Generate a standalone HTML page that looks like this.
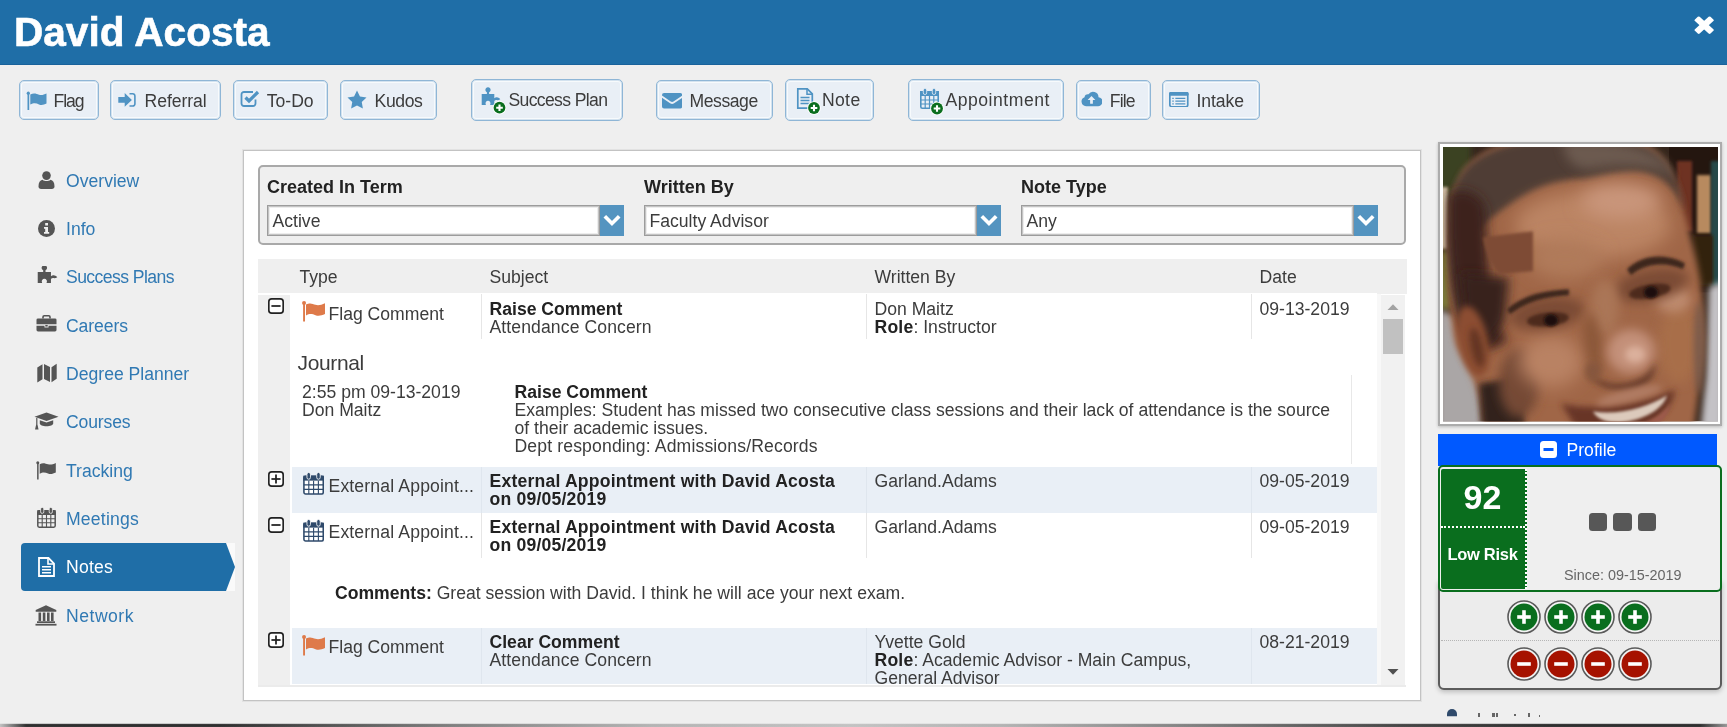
<!DOCTYPE html>
<html>
<head>
<meta charset="utf-8">
<title>David Acosta</title>
<style>
*{box-sizing:border-box;margin:0;padding:0}
html{background:#efefef}
html,body{width:1727px;height:727px;overflow:hidden;background:#efefef;font-family:"Liberation Sans",sans-serif;font-size:17.6px;color:#3c3c3c}
b{font-weight:bold;letter-spacing:.2px;color:#222}
.abs{position:absolute}
body{opacity:.9999}
#hdr{position:absolute;left:0;top:0;width:1727px;height:65px;background:#1f6ea7;border-bottom:1px solid #19629b}
#hdr h1{position:absolute;left:14px;top:8px;font-size:40.6px;line-height:48px;color:#fff;font-weight:bold;white-space:nowrap;-webkit-text-stroke:.6px #fff}
.btn{position:absolute;border:1px solid #8fb6d6;border-radius:5px;background:#e9eff6;box-shadow:inset 0 0 0 1px #d3e2ef,inset 0 0 0 2px #f7fafc;white-space:nowrap;color:#3c3c3c}
.btn span{position:absolute;line-height:20px}
.btn svg{position:absolute}
.nav{position:absolute;left:66px;color:#3079b3;line-height:20px;white-space:nowrap}
.navi{position:absolute}
#active{position:absolute;left:21px;top:543px;width:205px;height:48px;background:#1f6ea7;border-radius:4px 0 0 4px}
#active:after{content:"";position:absolute;left:205px;top:0;border-left:9px solid #1f6ea7;border-top:24px solid #fafafa;border-bottom:24px solid #fafafa}
#panel{position:absolute;left:243px;top:150px;width:1178px;height:551px;background:#fff;border:1px solid #c3c3c3;box-shadow:0 0 0 1px rgba(0,0,0,.05)}
#filter{position:absolute;left:258px;top:165px;width:1148px;height:80px;background:#efefef;border:2px solid #a9a9a9;border-radius:5px}
.flabel{position:absolute;top:177px;font-weight:bold;color:#222;font-size:18px;line-height:20px;white-space:nowrap}
.sel{position:absolute;top:205px;height:31px;width:333px;background:#fff;border:1px solid #9c9c9c;box-shadow:inset 0 0 0 1px #c4c4c4,inset 0 0 0 2px #ededed;line-height:31px;padding-left:4.5px;white-space:nowrap}
.selbtn{position:absolute;top:205px;width:24px;height:31px;background:#5494c0}
#thead{position:absolute;left:258px;top:259px;width:1148.5px;height:34.5px;background:#efefef}
.th{position:absolute;top:267px;line-height:20px;white-space:nowrap}
.t{position:absolute;line-height:18px;white-space:nowrap}
</style>
</head>
<body>
<div id="hdr"><h1>David Acosta</h1><svg class="abs" style="left:1694.400px;top:16px" width="20.300" height="18.300" viewBox="0 0 20 20" preserveAspectRatio="none"><g fill="#fff"><rect x="-0.850" y="6.700" width="21.700" height="6.600" rx="1.300" transform="rotate(45 10 10)"/><rect x="-0.850" y="6.700" width="21.700" height="6.600" rx="1.300" transform="rotate(-45 10 10)"/></g></svg></div>
<div class="btn" style="left:19px;width:80px;top:80px;height:40px"><svg style="left:6.0px;top:10.0px" width="22" height="20" viewBox="0 0 22 20"><circle cx="2.3" cy="2.2" r="1.6" fill="#4f93c3"/><rect x="1.5" y="2" width="1.7" height="17" fill="#4f93c3"/><path d="M4.3 3.6C8 1.6 10.5 3 13 3.800 15.500 4.600 18 3.800 20.500 2.600V12.400C18 13.800 15.500 14.400 13 13.400 10.500 12.400 8 11.600 4.300 13.600Z" fill="#4f93c3"/></svg><span style="left:33.5px;top:10.2px;font-size:17.6px;letter-spacing:-1.1px">Flag</span></div>
<div class="btn" style="left:110px;width:111px;top:80px;height:40px"><svg style="left:7px;top:11px" width="20" height="17" viewBox="0 0 20 17"><path d="M0.300 5.100h6.400V1L13.900 7.900 6.700 14.800V10.700H0.300z" fill="#4f93c3"/><path d="M11.500 1.800h3.300a2.100 2.100 0 0 1 2.100 2.100v8a2.100 2.100 0 0 1 -2.100 2.100H11.500" fill="none" stroke="#4f93c3" stroke-width="1.6"/></svg><span style="left:33.6px;top:10.2px;font-size:17.6px;letter-spacing:-0.07px">Referral</span></div>
<div class="btn" style="left:232.5px;width:95.5px;top:80px;height:40px"><svg style="left:6.0px;top:8.3px" width="21" height="19" viewBox="0 0 21 19"><path d="M15.500 10.500v4a2.500 2.500 0 0 1 -2.500 2.500H4a2.500 2.500 0 0 1 -2.500 -2.500V5.500a2.500 2.500 0 0 1 2.500 -2.500h9" fill="none" stroke="#4f93c3" stroke-width="1.8"/><path d="M5.500 8.500l3.500 3.500 9-9" fill="none" stroke="#4f93c3" stroke-width="3.200"/></svg><span style="left:33.2px;top:10.2px;font-size:17.6px;letter-spacing:0px">To-Do</span></div>
<div class="btn" style="left:339.5px;width:97.5px;top:80px;height:40px"><svg style="left:6.0px;top:9.0px" width="20" height="19" viewBox="0 0 21 20"><path d="M10.500 0.500l3.100 6.300 6.900 1-5 4.900 1.200 6.900-6.200-3.300-6.200 3.300 1.200-6.900-5-4.900 6.900-1z" fill="#4f93c3"/></svg><span style="left:34.1px;top:10.2px;font-size:17.6px;letter-spacing:-0.42px">Kudos</span></div>
<div class="btn" style="left:470.5px;width:152.5px;top:79px;height:42px"><svg style="left:9.4px;top:6.3px" width="28" height="30" viewBox="0 0 28 30"><path d="M0.7 7.9H5.9V6.2A2.6 2.6 0 1 1 8.1 6.2V7.9H13.3V12.2C14.2 11.4 15.4 11 16.6 11.4 18 11.8 19 12.6 19.3 13.2 18.3 13.9 17 14.3 15.6 14.1 14.6 14 13.9 14.3 13.3 15V19H9.2V18.3A2.45 2.45 0 1 0 4.8 18.3V19H0.7z" fill="#4f93c3"/><g transform="translate(18.5,21.7)"><circle r="6.8" fill="#fff"/><circle r="5.9" fill="#0a6e1e"/><path d="M-3.3 0H3.3M0 -3.3V3.3" stroke="#fff" stroke-width="2.1"/></g></svg><span style="left:36.9px;top:10.2px;font-size:17.6px;letter-spacing:-0.64px">Success Plan</span></div>
<div class="btn" style="left:655.5px;width:117.5px;top:80px;height:40px"><svg style="left:5px;top:12px" width="20.200" height="15.600" preserveAspectRatio="none" viewBox="0 0 22 17"><path d="M0 2.200a2.200 2.200 0 0 1 2.200-2.200h17.600a2.200 2.200 0 0 1 2.200 2.200v.6l-9.500 6.500q-1.500 1-3 0L0 2.800z" fill="#4f93c3"/><path d="M0 5.200l8.800 6q2.200 1.400 4.400 0l8.800-6v9.600a2.200 2.200 0 0 1 -2.200 2.200H2.200a2.200 2.200 0 0 1 -2.200-2.200z" fill="#4f93c3"/></svg><span style="left:33.1px;top:10.2px;font-size:17.6px;letter-spacing:-0.47px">Message</span></div>
<div class="btn" style="left:784.5px;width:89.5px;top:79px;height:42px"><svg style="left:10px;top:8px" width="28" height="28" viewBox="0 0 28 28"><path d="M1.800 0.900h9.500l5 5V20.100H1.800z" fill="none" stroke="#4f93c3" stroke-width="1.700"/><path d="M11 1v5.300h5.300" fill="none" stroke="#4f93c3" stroke-width="1.500"/><path d="M4.500 9.500h9M4.500 12.500h9M4.500 15.500h9" stroke="#4f93c3" stroke-width="1.300"/><g transform="translate(18,20)"><circle r="6.8" fill="#fff"/><circle r="5.9" fill="#0a6e1e"/><path d="M-3.3 0H3.3M0 -3.3V3.3" stroke="#fff" stroke-width="2.1"/></g></svg><span style="left:36.4px;top:10.2px;font-size:17.6px;letter-spacing:0.37px">Note</span></div>
<div class="btn" style="left:908px;width:155.5px;top:79px;height:42px"><svg style="left:10.0px;top:8.0px" width="28" height="28" viewBox="0 0 28 28"><rect x="1.800" y="3.800" width="17.400" height="16.400" rx="1.500" fill="none" stroke="#4f93c3" stroke-width="1.600"/><rect x="1" y="3" width="19" height="5" fill="#4f93c3"/><rect x="4.300" y="0.500" width="3.400" height="6" rx="1.600" fill="#4f93c3" stroke="#e9eff6" stroke-width="0.800"/><rect x="13.300" y="0.500" width="3.400" height="6" rx="1.600" fill="#4f93c3" stroke="#e9eff6" stroke-width="0.800"/><path d="M6.200 8v12M10.500 8v12M14.800 8v12M2 12h17M2 16h17" stroke="#4f93c3" stroke-width="1.200"/><g transform="translate(18,20.5)"><circle r="6.8" fill="#fff"/><circle r="5.9" fill="#0a6e1e"/><path d="M-3.3 0H3.3M0 -3.3V3.3" stroke="#fff" stroke-width="2.1"/></g></svg><span style="left:36.4px;top:10.2px;font-size:17.6px;letter-spacing:0.53px">Appointment</span></div>
<div class="btn" style="left:1075.5px;width:75px;top:80px;height:40px"><svg style="left:4.300px;top:10.300px" width="21" height="15.600" preserveAspectRatio="none" viewBox="0 0 23 17"><path d="M5.500 16.500a5 5 0 0 1 -1.600-9.700 3.600 3.600 0 0 1 4.300-3.300 6 6 0 0 1 11 3.200 4.900 4.900 0 0 1 -1.200 9.800z" fill="#4f93c3"/><path d="M11.500 5.500l4.200 4.400h-2.700v4h-3v-4H7.300z" fill="#e9eff6"/></svg><span style="left:33.3px;top:10.2px;font-size:17.6px;letter-spacing:-0.9px">File</span></div>
<div class="btn" style="left:1162px;width:97.5px;top:80px;height:40px"><svg style="left:6px;top:10.500px" width="19.600" height="15.600" preserveAspectRatio="none" viewBox="0 0 21 17"><rect x="0.900" y="0.900" width="19.200" height="15.200" rx="1.800" fill="none" stroke="#4f93c3" stroke-width="1.800"/><rect x="0" y="0" width="21" height="4" rx="1.500" fill="#4f93c3"/><path d="M3.500 7h1.600M3.500 10h1.600M3.500 13h1.600M6.800 7h10.700M6.800 10h10.700M6.800 13h10.700" stroke="#4f93c3" stroke-width="1.400"/></svg><span style="left:33.4px;top:10.2px;font-size:17.6px;letter-spacing:-0.06px">Intake</span></div>
<div id="active"></div>
<svg class="navi" style="left:38px;top:170.5px" width="17" height="18" viewBox="0 0 17 18"><circle cx="8.5" cy="4.600" r="4.300" fill="#555"/><path d="M0.500 15.500c0-4 1.500-6.300 4-6.800 1.200 1 2.600 1.400 4 1.400s2.800-.4 4-1.400c2.500.5 4 2.800 4 6.800 0 1.600-1 2.500-2.600 2.500H3.100C1.500 18 .5 17.100 .5 15.500z" fill="#555"/></svg>
<div class="nav" style="top:170.5px;">Overview</div>
<svg class="navi" style="left:38px;top:219.9px" width="17" height="17" viewBox="0 0 17 17"><circle cx="8.500" cy="8.500" r="8.500" fill="#555"/><path d="M7.200 3h2.800v2.400H7.200zM6 7h4v5h1.200v1.800H6V12h1.200V8.800H6z" fill="#efefef"/></svg>
<div class="nav" style="top:218.9px;">Info</div>
<svg class="navi" style="left:36.5px;top:266.2px" width="21" height="20" viewBox="0 0 20 20" preserveAspectRatio="none"><g transform="translate(0,-2)"><path d="M0.7 7.9H5.9V6.2A2.6 2.6 0 1 1 8.1 6.2V7.9H13.3V12.2C14.2 11.4 15.4 11 16.6 11.4 18 11.8 19 12.6 19.3 13.2 18.3 13.9 17 14.3 15.6 14.1 14.6 14 13.9 14.3 13.3 15V19H9.2V18.3A2.45 2.45 0 1 0 4.8 18.3V19H0.7z" fill="#555"/></g></svg>
<div class="nav" style="top:267.2px;letter-spacing:-0.58px;">Success Plans</div>
<svg class="navi" style="left:36px;top:315px" width="21" height="17.500" viewBox="0 0 21 18" preserveAspectRatio="none"><path d="M7 3.500V2a1.200 1.200 0 0 1 1.200-1.200h4.600A1.200 1.200 0 0 1 14 2v1.500" fill="none" stroke="#555" stroke-width="1.600"/><path d="M0.500 5a1.500 1.500 0 0 1 1.500-1.500h17a1.500 1.500 0 0 1 1.500 1.500v4.500h-20zM0.500 11h8v1.800h4V11h8v4.500a1.500 1.500 0 0 1-1.500 1.500H2a1.500 1.500 0 0 1-1.500-1.500z" fill="#555"/><rect x="9.300" y="10.200" width="2.400" height="1.700" fill="#555"/></svg>
<div class="nav" style="top:315.5px;letter-spacing:-0.1px;">Careers</div>
<svg class="navi" style="left:36.800px;top:363.4px" width="20" height="20" viewBox="0 0 20 20"><path d="M0.300 4.500L5.500 1.200V16.200L0.300 19.500zM7 1l6 3v15l-6-3zM14.500 4.200L19.700 0.800V15.800L14.500 19.200z" fill="#555"/></svg>
<div class="nav" style="top:363.9px;">Degree Planner</div>
<svg class="navi" style="left:34px;top:412.4px" width="25" height="18" viewBox="0 0 25 18"><path d="M12.500 0.500L24.500 4.800 12.500 9.100 0.500 4.800z" fill="#555"/><path d="M5.800 8.200l6.700 2.400 6.700-2.400v3.300c0 1.500-3 2.700-6.700 2.700s-6.700-1.200-6.700-2.700z" fill="#555"/><path d="M2.800 6v6.500l-1 4.500h2l-1-4.500" stroke="#555" stroke-width="1.200" fill="#555"/></svg>
<div class="nav" style="top:412.2px;letter-spacing:-0.15px;">Courses</div>
<svg class="navi" style="left:36px;top:461px" width="21" height="19" viewBox="0 0 21 19"><circle cx="1.800" cy="1.800" r="1.500" fill="#555"/><rect x="1.100" y="1.500" width="1.500" height="17" fill="#555"/><path d="M3.700 3.200C7 1.300 9.500 2.500 12 3.300c2.500.8 5 0 7.800-1.300V11.500c-2.800 1.400-5.300 2-7.800 1-2.500-1-5-1.700-8.300.2z" fill="#555"/></svg>
<div class="nav" style="top:460.5px;">Tracking</div>
<svg class="navi" style="left:37px;top:507.4px" width="19" height="21" viewBox="0 0 19 21"><rect x="0.800" y="3.800" width="17.400" height="16.400" rx="1.400" fill="none" stroke="#555" stroke-width="1.500"/><rect x="0.300" y="3.200" width="18.400" height="4.800" fill="#555"/><rect x="3.600" y="0.400" width="3.200" height="6" rx="1.500" fill="#555" stroke="#efefef" stroke-width="0.800"/><rect x="12.200" y="0.400" width="3.200" height="6" rx="1.500" fill="#555" stroke="#efefef" stroke-width="0.800"/><path d="M5.200 8v12M9.500 8v12M13.800 8v12M1 11.800h17M1 15.800h17" stroke="#555" stroke-width="1.100"/></svg>
<div class="nav" style="top:508.9px;letter-spacing:0.2px;">Meetings</div>
<svg class="navi" style="left:38px;top:556.7px" width="17" height="20" viewBox="0 0 17 20"><path d="M1 1h9.500l5.500 5.500V19H1z" fill="none" stroke="#fff" stroke-width="1.800"/><path d="M10 1.200V7h5.800" fill="none" stroke="#fff" stroke-width="1.600"/><path d="M4 9.700h9M4 12.700h9M4 15.700h9" stroke="#fff" stroke-width="1.400"/></svg>
<div class="nav" style="top:557.2px;color:#fff;letter-spacing:0.2px;">Notes</div>
<svg class="navi" style="left:35px;top:604.5px" width="22" height="21" viewBox="0 0 22 21"><path d="M11 0.300L21.300 5v1.700H0.700V5z" fill="#555"/><path d="M3.500 7.500h2.600V16H3.500zM7.800 7.500h2.600V16H7.800zM12 7.500h2.600V16H12zM16 7.500h2.600V16H16z" fill="#555"/><rect x="2" y="16.300" width="18" height="1.700" fill="#555"/><rect x="0.500" y="18.800" width="21" height="1.800" fill="#555"/></svg>
<div class="nav" style="top:605.5px;letter-spacing:0.5px;">Network</div>
<div id="panel"></div>
<div id="filter"></div>
<div class="flabel" style="left:267px">Created In Term</div>
<div class="sel" style="left:267px">Active</div>
<div class="selbtn" style="left:600px"><svg width="24" height="31" viewBox="0 0 24 31"><path d="M4.800 11.300l7.200 7.200 7.200-7.200" fill="none" stroke="#fff" stroke-width="3.700"/></svg></div>
<div class="flabel" style="left:644px">Written By</div>
<div class="sel" style="left:644px">Faculty Advisor</div>
<div class="selbtn" style="left:977px"><svg width="24" height="31" viewBox="0 0 24 31"><path d="M4.800 11.300l7.200 7.200 7.200-7.200" fill="none" stroke="#fff" stroke-width="3.700"/></svg></div>
<div class="flabel" style="left:1021px">Note Type</div>
<div class="sel" style="left:1021px">Any</div>
<div class="selbtn" style="left:1354px"><svg width="24" height="31" viewBox="0 0 24 31"><path d="M4.800 11.300l7.200 7.200 7.200-7.200" fill="none" stroke="#fff" stroke-width="3.700"/></svg></div>
<div id="thead"></div>
<div class="abs" style="left:258px;top:293px;width:32px;height:392px;background:#efefef"></div>
<div class="abs" style="left:258px;top:293px;width:1119px;height:1.5px;background:#fff"></div>
<div class="abs" style="left:1377px;top:294px;width:4px;height:391px;background:#f8f8f8"></div>
<div class="abs" style="left:1381px;top:294.5px;width:23.5px;height:390.5px;background:#f1f1f1"></div>
<div class="abs" style="left:258px;top:685px;width:1148px;height:2px;background:#ebebeb"></div>
<div class="th" style="left:299.5px">Type</div>
<div class="th" style="left:489.5px">Subject</div>
<div class="th" style="left:874.5px">Written By</div>
<div class="th" style="left:1259.5px">Date</div>
<div class="abs" style="left:292px;top:467px;width:1085px;height:46px;background:#e9eff6"></div>
<div class="abs" style="left:292px;top:628px;width:1085px;height:56px;background:#e9eff6"></div>
<div class="abs" style="left:481px;top:294px;width:1px;height:45px;background:#e6e6e6"></div>
<div class="abs" style="left:866px;top:294px;width:1px;height:45px;background:#e6e6e6"></div>
<div class="abs" style="left:1251px;top:294px;width:1px;height:45px;background:#e6e6e6"></div>
<div class="abs" style="left:481px;top:513px;width:1px;height:45px;background:#e6e6e6"></div>
<div class="abs" style="left:866px;top:513px;width:1px;height:45px;background:#e6e6e6"></div>
<div class="abs" style="left:1251px;top:513px;width:1px;height:45px;background:#e6e6e6"></div>
<div class="abs" style="left:481px;top:467px;width:1px;height:46px;background:#dfe6ee"></div>
<div class="abs" style="left:866px;top:467px;width:1px;height:46px;background:#dfe6ee"></div>
<div class="abs" style="left:1251px;top:467px;width:1px;height:46px;background:#dfe6ee"></div>
<div class="abs" style="left:481px;top:628px;width:1px;height:56px;background:#dfe6ee"></div>
<div class="abs" style="left:866px;top:628px;width:1px;height:56px;background:#dfe6ee"></div>
<div class="abs" style="left:1251px;top:628px;width:1px;height:56px;background:#dfe6ee"></div>
<div class="abs" style="left:1351px;top:375px;width:1px;height:89px;background:#e8e8e8"></div>
<svg class="abs" style="left:267.5px;top:298px" width="16" height="16" viewBox="0 0 15.5 15.5"><rect x="0.800" y="0.800" width="13.900" height="13.900" rx="2.800" fill="#fff" stroke="#222" stroke-width="1.600"/><path d="M3.300 7.750h8.900" stroke="#222" stroke-width="1.700"/></svg>
<svg class="abs" style="left:267.5px;top:470.5px" width="16" height="16" viewBox="0 0 15.5 15.5"><rect x="0.800" y="0.800" width="13.900" height="13.900" rx="2.800" fill="#fff" stroke="#222" stroke-width="1.600"/><path d="M3.300 7.750h8.900" stroke="#222" stroke-width="1.700"/><path d="M7.750 3.300v8.900" stroke="#222" stroke-width="1.700"/></svg>
<svg class="abs" style="left:267.5px;top:517px" width="16" height="16" viewBox="0 0 15.5 15.5"><rect x="0.800" y="0.800" width="13.900" height="13.900" rx="2.800" fill="#fff" stroke="#222" stroke-width="1.600"/><path d="M3.300 7.750h8.900" stroke="#222" stroke-width="1.700"/></svg>
<svg class="abs" style="left:267.5px;top:632px" width="16" height="16" viewBox="0 0 15.5 15.5"><rect x="0.800" y="0.800" width="13.900" height="13.900" rx="2.800" fill="#fff" stroke="#222" stroke-width="1.600"/><path d="M3.300 7.750h8.900" stroke="#222" stroke-width="1.700"/><path d="M7.750 3.300v8.900" stroke="#222" stroke-width="1.700"/></svg>
<svg class="abs" style="left:302px;top:300.5px" width="24" height="21" viewBox="0 0 24 21"><circle cx="2.050" cy="2.100" r="2" fill="#de7a4a"/><rect x="1.100" y="2" width="1.900" height="18.500" fill="#de7a4a"/><path d="M4 3.600C8 1.400 10.500 2.800 13.500 3.800c3 1 6 0 9.500-1.600V13c-3.500 1.600-6.500 2.300-9.500 1.200-3-1.100-5.500-2-9.500 .2z" fill="#de7a4a"/></svg>
<svg class="abs" style="left:303px;top:472px" width="21.200" height="23" viewBox="0 0 23 24" preserveAspectRatio="none"><rect x="1" y="4.500" width="21" height="18.500" rx="1.800" fill="#fff" stroke="#2f4a6b" stroke-width="1.700"/><rect x="0.300" y="3.800" width="22.400" height="5.200" fill="#2f4a6b"/><rect x="4.300" y="0.500" width="3.800" height="7" rx="1.800" fill="#2f4a6b" stroke="#fff" stroke-width="0.900"/><rect x="14.900" y="0.500" width="3.800" height="7" rx="1.800" fill="#2f4a6b" stroke="#fff" stroke-width="0.900"/><path d="M6.300 9v14M11.500 9v14M16.700 9v14M1 13.500h21M1 18.200h21" stroke="#2f4a6b" stroke-width="1.200"/></svg>
<svg class="abs" style="left:303px;top:518.5px" width="21.200" height="23" viewBox="0 0 23 24" preserveAspectRatio="none"><rect x="1" y="4.500" width="21" height="18.500" rx="1.800" fill="#fff" stroke="#2f4a6b" stroke-width="1.700"/><rect x="0.300" y="3.800" width="22.400" height="5.200" fill="#2f4a6b"/><rect x="4.300" y="0.500" width="3.800" height="7" rx="1.800" fill="#2f4a6b" stroke="#fff" stroke-width="0.900"/><rect x="14.900" y="0.500" width="3.800" height="7" rx="1.800" fill="#2f4a6b" stroke="#fff" stroke-width="0.900"/><path d="M6.300 9v14M11.500 9v14M16.700 9v14M1 13.500h21M1 18.200h21" stroke="#2f4a6b" stroke-width="1.200"/></svg>
<svg class="abs" style="left:302px;top:634.5px" width="24" height="21" viewBox="0 0 24 21"><circle cx="2.050" cy="2.100" r="2" fill="#de7a4a"/><rect x="1.100" y="2" width="1.900" height="18.500" fill="#de7a4a"/><path d="M4 3.600C8 1.400 10.500 2.800 13.500 3.800c3 1 6 0 9.500-1.600V13c-3.500 1.600-6.500 2.300-9.500 1.200-3-1.100-5.500-2-9.500 .2z" fill="#de7a4a"/></svg>
<div class="t" style="left:328.5px;top:304.7px;">Flag Comment</div>
<div class="t" style="left:489.5px;top:300.1px;"><b style="letter-spacing:0">Raise Comment</b></div>
<div class="t" style="left:489.5px;top:317.6px;letter-spacing:.1px">Attendance Concern</div>
<div class="t" style="left:874.5px;top:300.0px;">Don Maitz</div>
<div class="t" style="left:874.5px;top:317.6px;"><b>Role</b>: Instructor</div>
<div class="t" style="left:1259.5px;top:300.0px;">09-13-2019</div>
<div class="t" style="left:297.500px;top:351px;font-size:21px;line-height:24px;letter-spacing:-.35px">Journal</div>
<div class="t" style="left:302px;top:382.9px;">2:55 pm 09-13-2019</div>
<div class="t" style="left:302px;top:401.0px;">Don Maitz</div>
<div class="t" style="left:514.5px;top:382.9px;"><b style="letter-spacing:0">Raise Comment</b></div>
<div class="t" style="left:514.5px;top:401.0px;">Examples: Student has missed two consecutive class sessions and their lack of attendance is the source</div>
<div class="t" style="left:514.5px;top:419.1px;">of their academic issues.</div>
<div class="t" style="left:514.5px;top:437.1px;letter-spacing:.14px">Dept responding: Admissions/Records</div>
<div class="t" style="left:328.5px;top:477.0px;letter-spacing:.15px">External Appoint...</div>
<div class="t" style="left:489.5px;top:471.5px;"><b>External Appointment with David Acosta</b></div>
<div class="t" style="left:489.5px;top:489.6px;"><b>on 09/05/2019</b></div>
<div class="t" style="left:874.5px;top:471.5px;">Garland.Adams</div>
<div class="t" style="left:1259.5px;top:471.5px;">09-05-2019</div>
<div class="t" style="left:328.5px;top:523.4px;letter-spacing:.15px">External Appoint...</div>
<div class="t" style="left:489.5px;top:517.9px;"><b>External Appointment with David Acosta</b></div>
<div class="t" style="left:489.5px;top:536.0px;"><b>on 09/05/2019</b></div>
<div class="t" style="left:874.5px;top:517.9px;">Garland.Adams</div>
<div class="t" style="left:1259.5px;top:517.9px;">09-05-2019</div>
<div class="t" style="left:335px;top:584.0px;"><b style="letter-spacing:0">Comments:</b> Great session with David. I think he will ace your next exam.</div>
<div class="t" style="left:328.5px;top:638.0px;">Flag Comment</div>
<div class="t" style="left:489.5px;top:633.0px;"><b style="letter-spacing:0">Clear Comment</b></div>
<div class="t" style="left:489.5px;top:650.9px;letter-spacing:.1px">Attendance Concern</div>
<div class="t" style="left:874.5px;top:633.0px;">Yvette Gold</div>
<div class="t" style="left:874.5px;top:651.0px;"><b>Role</b>: Academic Advisor - Main Campus,</div>
<div class="t" style="left:874.500px;top:669.100px;height:16px;overflow:hidden">General Advisor</div>
<div class="t" style="left:1259.5px;top:633.0px;">08-21-2019</div>
<div class="abs" style="left:1383px;top:318.5px;width:19.700px;height:35px;background:#c1c1c1"></div>
<svg class="abs" style="left:1387px;top:303px" width="12" height="8" viewBox="0 0 12 8"><path d="M0.500 7l5.500-5.800 5.500 5.800z" fill="#a3a3a3"/></svg>
<svg class="abs" style="left:1387px;top:668px" width="12" height="8" viewBox="0 0 12 8"><path d="M0.500 1l5.500 5.800 5.500-5.800z" fill="#505050"/></svg>
<div class="abs" style="left:1438px;top:142px;width:284px;height:284px;background:#fff;border:2px solid #acacac;box-shadow:0 1px 3px rgba(0,0,0,.22)"></div>
<svg class="abs" style="left:1442.500px;top:147px" width="275" height="274.500" preserveAspectRatio="none" viewBox="0 0 275 274">
<defs>
<filter id="b2" x="-150%" y="-150%" width="400%" height="400%"><feGaussianBlur stdDeviation="1.8"/></filter>
<filter id="b3" x="-150%" y="-150%" width="400%" height="400%"><feGaussianBlur stdDeviation="3"/></filter>
<filter id="b6" x="-150%" y="-150%" width="400%" height="400%"><feGaussianBlur stdDeviation="5.500"/></filter>
<filter id="b10" x="-150%" y="-150%" width="400%" height="400%"><feGaussianBlur stdDeviation="9"/></filter>
<filter id="b16" x="-150%" y="-150%" width="400%" height="400%"><feGaussianBlur stdDeviation="14"/></filter>
<clipPath id="pc"><rect width="275" height="274"/></clipPath>
</defs>
<g clip-path="url(#pc)">
<rect width="275" height="274" fill="#35261d"/>
<!-- bg left -->
<rect x="-6" y="-6" width="34" height="56" fill="#3a4224" filter="url(#b3)"/>
<rect x="-4" y="40" width="9" height="62" fill="#cdbda4" filter="url(#b2)"/>
<rect x="-4" y="104" width="12" height="58" fill="#7c7e3a" filter="url(#b3)"/>
<!-- bg right -->
<rect x="226" y="-5" width="60" height="150" fill="#24160f"/>
<rect x="234" y="14" width="15" height="70" fill="#6e3222" filter="url(#b2)"/>
<rect x="254" y="28" width="14" height="58" fill="#b88a5e" filter="url(#b2)"/>
<rect x="268" y="14" width="10" height="125" fill="#254848" filter="url(#b2)"/>
<rect x="250" y="88" width="20" height="50" fill="#33200f" filter="url(#b2)"/>
<!-- shirt left / right -->
<path d="M-5 162 L12 168 L28 200 L38 240 L40 280 L-5 280z" fill="#aaa6a6" filter="url(#b3)"/>
<path d="M266 140 L280 134 L280 280 L258 280 L263 230z" fill="#c4c2c6" filter="url(#b3)"/>
<!-- head base -->
<path d="M20 24 C45 -10 110 -16 150 -14 C205 -12 228 4 240 60 C250 100 260 130 260 170 C260 215 255 250 250 285 L40 285 C40 250 30 230 14 200 C4 170 2 100 8 48z" fill="#a06646" filter="url(#b3)"/>
<!-- hair -->
<path d="M8 60 C10 20 40 -10 140 -10 C210 -10 232 10 242 66 C232 38 214 24 190 24 C160 26 150 32 137 32 C110 34 90 40 60 62 C40 76 30 88 24 96 C20 110 22 150 24 190 C10 170 4 120 8 60z" fill="#503e35" filter="url(#b3)"/>
<path d="M120 -6 C170 -8 215 -2 232 30 C210 18 180 16 150 22 C130 24 120 10 120 -6z" fill="#6c5a50" filter="url(#b6)"/>
<path d="M6 50 C10 40 34 40 42 60 L46 120 C46 160 56 186 66 194 L40 204 C14 180 4 120 6 50z" fill="#3e241a" filter="url(#b6)"/>
<path d="M18 126 L66 130 L62 172 L44 198 L22 182z" fill="#38221a" filter="url(#b6)"/>
<!-- forehead -->
<ellipse cx="150" cy="78" rx="78" ry="34" fill="#bb8463" filter="url(#b10)"/>
<ellipse cx="178" cy="54" rx="40" ry="18" fill="#c9957a" filter="url(#b10)"/>
<ellipse cx="122" cy="112" rx="38" ry="20" fill="#b07a5a" filter="url(#b10)"/>
<!-- dark patch -->
<path d="M40 90 L90 84 L90 124 L56 127 C48 118 42 104 40 90z" fill="#7e4c36" filter="url(#b2)"/>
<!-- ear -->
<ellipse cx="30" cy="194" rx="15" ry="36" fill="#8c4e32" filter="url(#b3)" transform="rotate(-12 30 194)"/>
<ellipse cx="34" cy="200" rx="6" ry="20" fill="#643422" filter="url(#b3)" transform="rotate(-12 34 200)"/>
<!-- neck shadow -->
<path d="M36 236 L76 230 L82 280 L40 280z" fill="#33241e" filter="url(#b3)"/>
<!-- left jaw -->
<ellipse cx="76" cy="236" rx="20" ry="34" fill="#744a36" filter="url(#b6)"/>
<!-- cheeks -->
<ellipse cx="108" cy="214" rx="32" ry="26" fill="#b98264" filter="url(#b10)"/>
<ellipse cx="236" cy="196" rx="20" ry="40" fill="#a86e48" filter="url(#b6)"/>
<ellipse cx="256" cy="200" rx="5" ry="46" fill="#7c5c4c" filter="url(#b3)"/>
<ellipse cx="230" cy="152" rx="18" ry="13" fill="#bf8c70" filter="url(#b6)"/>
<!-- eye sockets -->
<ellipse cx="104" cy="166" rx="38" ry="16" fill="#7c4c34" filter="url(#b6)" transform="rotate(-8 104 166)"/>
<ellipse cx="208" cy="138" rx="38" ry="16" fill="#7c4c34" filter="url(#b6)" transform="rotate(-12 208 138)"/>
<!-- nose -->
<ellipse cx="162" cy="160" rx="14" ry="28" fill="#aa7656" filter="url(#b6)"/><ellipse cx="150" cy="196" rx="8" ry="30" fill="#8a5638" filter="url(#b6)" transform="rotate(-8 150 196)"/>
<ellipse cx="188" cy="204" rx="24" ry="22" fill="#c4917a" filter="url(#b6)"/>
<ellipse cx="192" cy="207" rx="10" ry="8" fill="#dbb09c" filter="url(#b3)"/>
<path d="M146 226 C160 238 180 240 196 232 C204 228 210 222 212 214 C214 228 204 240 186 242 C168 244 152 238 146 226z" fill="#5e3626" filter="url(#b3)"/>
<ellipse cx="150" cy="224" rx="8" ry="10" fill="#86563c" filter="url(#b3)"/>
<!-- eyebrows -->
<path d="M64 162 C78 149 100 143 126 142 L126 148 C106 149 86 153 67 167z" fill="#3e281e" filter="url(#b2)"/>
<path d="M184 122 C198 108 222 105 242 116 L240 122 C222 114 202 116 188 128z" fill="#3e281e" filter="url(#b2)"/>
<!-- eyes -->
<ellipse cx="105" cy="172" rx="21" ry="7" fill="#4e2c1e" filter="url(#b2)" transform="rotate(-6 106 173)"/>
<ellipse cx="207" cy="144" rx="21" ry="7" fill="#4e2c1e" filter="url(#b2)" transform="rotate(-10 207 145)"/>
<ellipse cx="108" cy="173" rx="7" ry="6" fill="#1c110c" filter="url(#b2)"/>
<ellipse cx="208" cy="145" rx="7" ry="6" fill="#1c110c" filter="url(#b2)"/>
<!-- mouth -->
<path d="M118 256 C150 264 196 258 232 242 C230 262 210 285 170 285 L136 285z" fill="#683428" filter="url(#b3)"/>
<path d="M150 264 C176 268 204 260 224 248 C220 262 200 273 176 275 C164 275 154 272 150 264z" fill="#dccabc" filter="url(#b2)"/>
<path d="M170 281 C196 281 216 271 228 256 C224 275 206 288 176 288z" fill="#9c5a4c" filter="url(#b2)"/>
<ellipse cx="186" cy="248" rx="34" ry="6" fill="#b07c64" filter="url(#b3)" transform="rotate(-14 186 248)"/>
</g></svg>

<div class="abs" style="left:1438px;top:434px;width:279px;height:32px;background:#0059ff"></div>
<svg class="abs" style="left:1540px;top:441px" width="17" height="17" viewBox="0 0 17 17"><rect width="17" height="17" rx="3.500" fill="#fff"/><rect x="3.500" y="7" width="10" height="3" fill="#0059ff"/></svg>
<div class="t" style="left:1566.500px;top:440.500px;color:#fff">Profile</div>
<div class="abs" style="left:1438px;top:580px;width:284px;height:110px;background:#ececec;border:2px solid #5c5c5c;border-radius:0 0 6px 6px;box-shadow:0 2px 5px rgba(0,0,0,.22)"></div>
<div class="abs" style="left:1441px;top:640px;width:278px;height:0;border-top:1px dotted #b5b5b5"></div>
<div class="abs" style="left:1438px;top:465px;width:284px;height:127px;background:#efefef;border:2px solid #0a6e1e;border-radius:5px"></div>
<div class="abs" style="left:1441px;top:469px;width:85.500px;height:119.500px;background:#0a6e1e;border-radius:2px 0 0 2px;border-right:2px dotted #fff"></div>
<div class="abs" style="left:1441px;top:526px;width:84px;height:0;border-top:2px dotted #fff"></div>
<div class="t" style="left:1440px;top:478px;width:85px;text-align:center;font-size:34px;line-height:38px;font-weight:bold;color:#fff">92</div>
<div class="t" style="left:1440px;top:544px;width:85px;text-align:center;font-size:16.500px;line-height:20px;font-weight:bold;color:#fff;letter-spacing:-.3px">Low Risk</div>
<div class="abs" style="left:1588.5px;top:513px;width:18.500px;height:17.500px;background:#575757;border-radius:3.500px"></div>
<div class="abs" style="left:1613px;top:513px;width:18.500px;height:17.500px;background:#575757;border-radius:3.500px"></div>
<div class="abs" style="left:1637.5px;top:513px;width:18.500px;height:17.500px;background:#575757;border-radius:3.500px"></div>
<div class="t" style="left:1564px;top:565.500px;font-size:14.400px;color:#666">Since: 09-15-2019</div>
<svg class="abs" style="left:1505.8px;top:598.5px" width="36" height="36" viewBox="-18 -18 36 36"><circle r="16" fill="#f4f4f4" stroke="#5a5a5a" stroke-width="1.600"/><circle r="13.500" fill="#0a6e1e"/><path d="M-6.800 0H6.800" stroke="#fff" stroke-width="3.600"/><path d="M0 -6.800V6.800" stroke="#fff" stroke-width="3.600"/></svg>
<svg class="abs" style="left:1505.8px;top:645.9px" width="36" height="36" viewBox="-18 -18 36 36"><circle r="16" fill="#f4f4f4" stroke="#5a5a5a" stroke-width="1.600"/><circle r="13.500" fill="#a61200"/><path d="M-6.800 0H6.800" stroke="#fff" stroke-width="3.600"/></svg>
<svg class="abs" style="left:1542.8px;top:598.5px" width="36" height="36" viewBox="-18 -18 36 36"><circle r="16" fill="#f4f4f4" stroke="#5a5a5a" stroke-width="1.600"/><circle r="13.500" fill="#0a6e1e"/><path d="M-6.800 0H6.800" stroke="#fff" stroke-width="3.600"/><path d="M0 -6.800V6.800" stroke="#fff" stroke-width="3.600"/></svg>
<svg class="abs" style="left:1542.8px;top:645.9px" width="36" height="36" viewBox="-18 -18 36 36"><circle r="16" fill="#f4f4f4" stroke="#5a5a5a" stroke-width="1.600"/><circle r="13.500" fill="#a61200"/><path d="M-6.800 0H6.800" stroke="#fff" stroke-width="3.600"/></svg>
<svg class="abs" style="left:1579.7px;top:598.5px" width="36" height="36" viewBox="-18 -18 36 36"><circle r="16" fill="#f4f4f4" stroke="#5a5a5a" stroke-width="1.600"/><circle r="13.500" fill="#0a6e1e"/><path d="M-6.800 0H6.800" stroke="#fff" stroke-width="3.600"/><path d="M0 -6.800V6.800" stroke="#fff" stroke-width="3.600"/></svg>
<svg class="abs" style="left:1579.7px;top:645.9px" width="36" height="36" viewBox="-18 -18 36 36"><circle r="16" fill="#f4f4f4" stroke="#5a5a5a" stroke-width="1.600"/><circle r="13.500" fill="#a61200"/><path d="M-6.800 0H6.800" stroke="#fff" stroke-width="3.600"/></svg>
<svg class="abs" style="left:1616.7px;top:598.5px" width="36" height="36" viewBox="-18 -18 36 36"><circle r="16" fill="#f4f4f4" stroke="#5a5a5a" stroke-width="1.600"/><circle r="13.500" fill="#0a6e1e"/><path d="M-6.800 0H6.800" stroke="#fff" stroke-width="3.600"/><path d="M0 -6.800V6.800" stroke="#fff" stroke-width="3.600"/></svg>
<svg class="abs" style="left:1616.7px;top:645.9px" width="36" height="36" viewBox="-18 -18 36 36"><circle r="16" fill="#f4f4f4" stroke="#5a5a5a" stroke-width="1.600"/><circle r="13.500" fill="#a61200"/><path d="M-6.800 0H6.800" stroke="#fff" stroke-width="3.600"/></svg>
<svg class="abs" style="left:1447px;top:709.400px" width="10" height="7.200" viewBox="0 0 10 7.200"><path d="M0 7.200V5a5 5 0 0 1 10 0V7.200z" fill="#2f4a6b"/></svg>
<div class="abs" style="left:1478px;top:712.5px;width:2px;height:4.5px;background:#666"></div>
<div class="abs" style="left:1491.7px;top:712.5px;width:3px;height:4.5px;background:#666"></div>
<div class="abs" style="left:1495.7px;top:712.5px;width:2.6px;height:4.5px;background:#666"></div>
<div class="abs" style="left:1514px;top:713.5px;width:2px;height:2px;background:#666"></div>
<div class="abs" style="left:1527.6px;top:712.5px;width:2px;height:4.5px;background:#666"></div>
<div class="abs" style="left:1538.6px;top:715px;width:1.5px;height:2px;background:#666"></div>
<div class="abs" style="left:0;top:723px;width:1727px;height:4px;background:linear-gradient(#f6f6f6 0,#b0b0b0 20%,#343434 38%,#2e2e2e 70%,#3c3c3c 100%)"></div>
<div class="abs" style="left:0;top:723px;width:1727px;height:4px;background:linear-gradient(90deg,rgba(236,236,236,0.78) 0px,rgba(236,236,236,0) 26px,rgba(236,236,236,0) 220px,rgba(236,236,236,0.42) 450px,rgba(236,236,236,0.7) 650px,rgba(236,236,236,0.78) 850px,rgba(236,236,236,0.7) 1000px,rgba(236,236,236,0.42) 1200px,rgba(236,236,236,0.12) 1400px,rgba(236,236,236,0) 1550px,rgba(236,236,236,0) 1700px,rgba(236,236,236,0.55) 1727px)"></div>
</body>
</html>
